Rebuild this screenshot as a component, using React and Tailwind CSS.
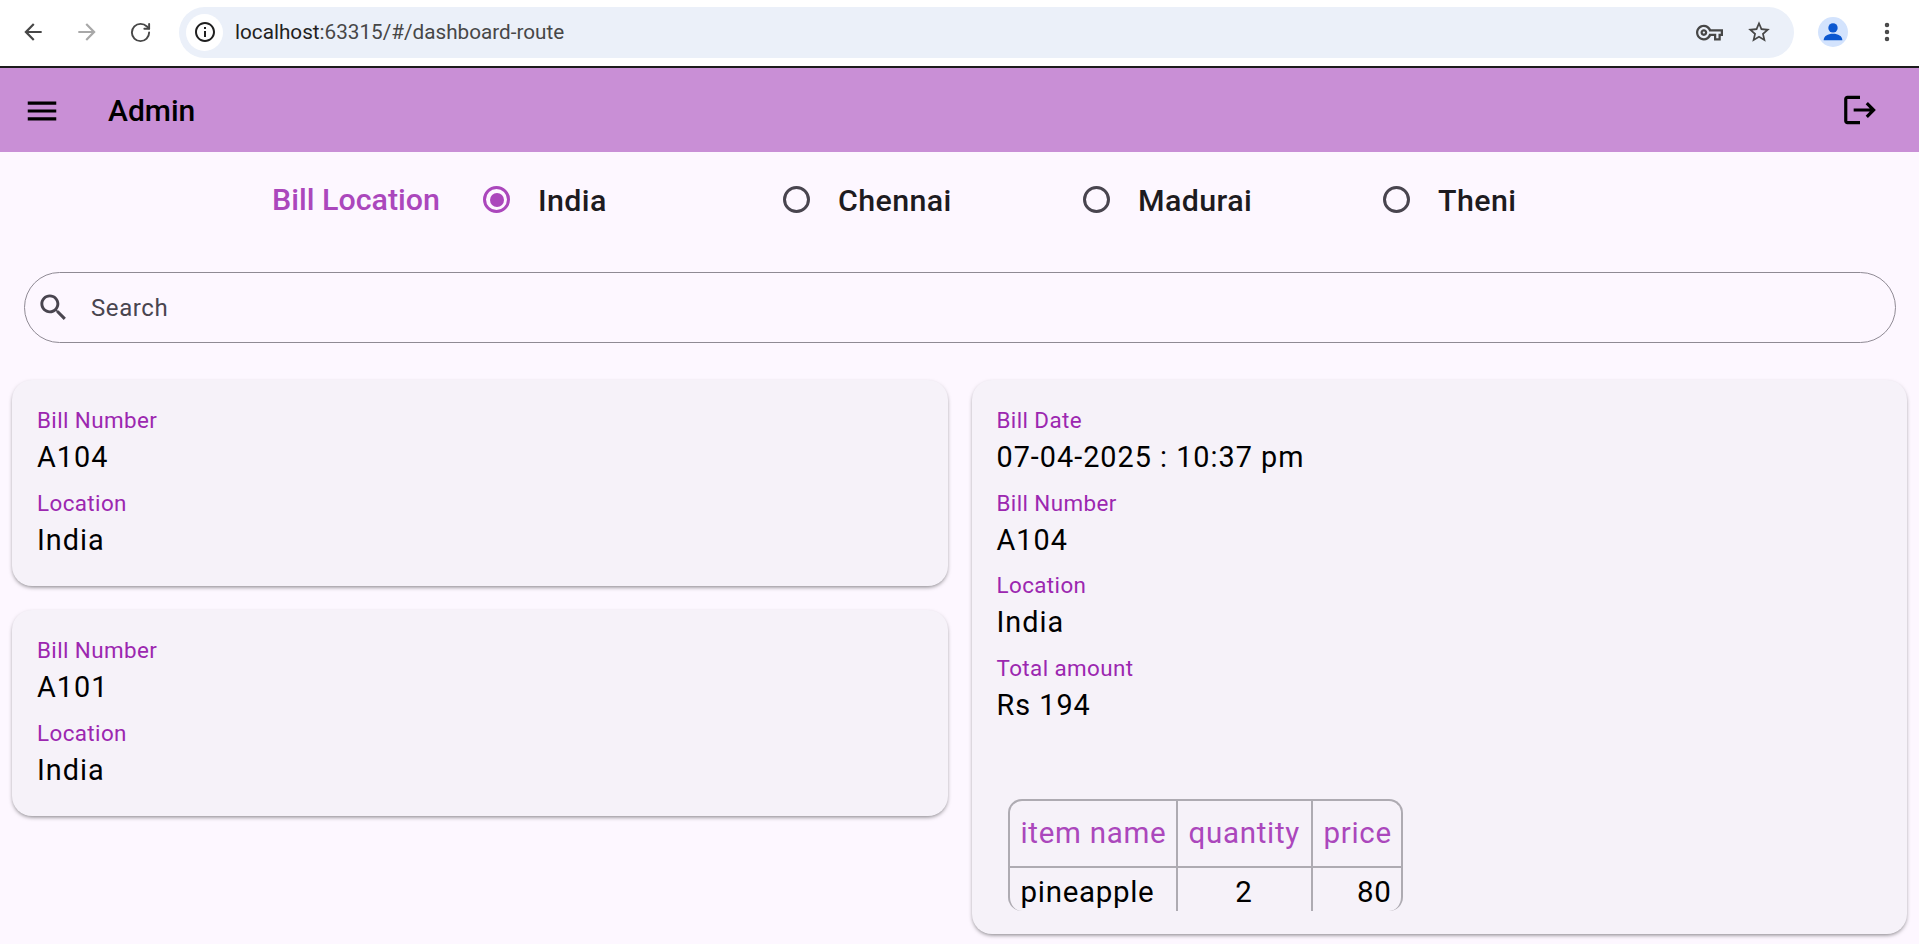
import React from 'react';
import { RotateCw, EllipsisVertical } from 'lucide-react';

function Field({ label, value }) {
  return (
    <div className="mb-[8.6px]">
      <div className="text-[22.4px] leading-[30px] tracking-[0.4px] text-[#9c27b0]">{label}</div>
      <div className="text-[28.8px] leading-[44px] tracking-[1px] text-black">{value}</div>
    </div>
  );
}

function Radio({ label, checked }) {
  return (
    <div className="flex w-[300px] items-center">
      <div className={`flex h-[27px] w-[27px] items-center justify-center rounded-full border-[3px] ${checked ? 'border-[#ab47bc]' : 'border-[#49454f]'}`}>
        {checked && <div className="h-[14px] w-[14px] rounded-full bg-[#ab47bc]" />}
      </div>
      <span className="ml-[28px] pt-[1px] text-[30.4px] font-medium tracking-[0.4px] text-[#1d1b20]">{label}</span>
    </div>
  );
}

function Icon({ d, size, className }) {
  return (
    <svg viewBox="0 0 24 24" width={size} height={size} className={`shrink-0 fill-current ${className}`}>
      <path d={d} />
    </svg>
  );
}

const ICONS = {
  back: 'M20 11H7.83l5.59-5.59L12 4l-8 8 8 8 1.41-1.41L7.83 13H20v-2z',
  forward: 'M4 11h12.17l-5.59-5.59L12 4l8 8-8 8-1.41-1.41L16.17 13H4v-2z',
  key: 'M22 19h-6v-4h-2.68c-1.14 2.42-3.6 4-6.32 4-3.86 0-7-3.14-7-7s3.14-7 7-7c2.72 0 5.17 1.58 6.32 4H24v6h-2v4zm-4-2h2v-4h2v-2H11.66l-.23-.67C10.73 8.34 8.84 7 7 7c-2.76 0-5 2.24-5 5s2.24 5 5 5c1.84 0 3.73-1.34 4.43-3.33l.23-.67H18v4zM7 15c-1.65 0-3-1.35-3-3s1.35-3 3-3 3 1.35 3 3-1.35 3-3 3zm0-4c-.55 0-1 .45-1 1s.45 1 1 1 1-.45 1-1-.45-1-1-1z',
  star: 'M22 9.24l-7.19-.62L12 2 9.19 8.63 2 9.24l5.46 4.73L5.82 21 12 17.27 18.18 21l-1.63-7.03L22 9.24zM12 15.4l-3.76 2.27 1-4.28-3.32-2.88 4.38-.38L12 6.1l1.71 4.04 4.38.38-3.32 2.88 1 4.28L12 15.4z',
  info: 'M11 7h2v2h-2zm0 4h2v6h-2zm1-9C6.48 2 2 6.48 2 12s4.48 10 10 10 10-4.48 10-10S17.52 2 12 2zm0 18c-4.41 0-8-3.59-8-8s3.59-8 8-8 8 3.59 8 8-3.59 8-8 8z',
  menu: 'M3 18h18v-2H3v2zm0-5h18v-2H3v2zm0-7v2h18V6H3z',
  logout: 'M17 7l-1.41 1.41L18.17 11H8v2h10.17l-2.58 2.58L17 17l5-5zM4 5h8V3H4c-1.1 0-2 .9-2 2v14c0 1.1.9 2 2 2h8v-2H4V5z',
  search: 'M15.5 14h-.79l-.28-.27C15.41 12.59 16 11.11 16 9.5 16 5.91 13.09 3 9.5 3S3 5.91 3 9.5 5.91 16 9.5 16c1.61 0 3.09-.59 4.23-1.57l.27.28v.79l5 4.99L20.49 19l-4.99-5zm-6 0C7.01 14 5 11.99 5 9.5S7.01 5 9.5 5 14 7.01 14 9.5 11.99 14 9.5 14z',
};

function BillCard({ number }) {
  return (
    <div className="h-[206px] rounded-[20px] bg-[#f6f2f9] px-[25px] pt-[25px] shadow-[0_2px_4px_-1px_rgba(0,0,0,0.5)]">
      <Field label="Bill Number" value={number} />
      <Field label="Location" value="India" />
    </div>
  );
}

function BrowserBar() {
  return (
    <div className="flex h-[68px] items-center border-b-2 border-[#1c1c1c] bg-white pb-[2px] pl-[20px] pr-[20px]">
      <Icon d={ICONS.back} size={26} className="text-[#474747]" />
      <Icon d={ICONS.forward} size={26} className="ml-[28px] text-[#a8a8a8]" />
      <RotateCw size={23} strokeWidth={2} className="ml-[29px] text-[#474747]" />
      <div className="ml-[27px] flex h-[51px] flex-1 items-center rounded-full bg-[#ebf0f9] pl-[7px] pr-[22px]">
        <div className="flex h-[37px] w-[37px] items-center justify-center rounded-full bg-white">
          <Icon d={ICONS.info} size={24} className="text-[#1f1f1f]" />
        </div>
        <span className="ml-[12px] pt-[1px] text-[20.7px] text-[#1f1f1f]">
          localhost<span className="text-[#474747]">:63315/#/dashboard-route</span>
        </span>
        <div className="flex-1" />
        <Icon d={ICONS.key} size={27} className="text-[#474747]" />
        <Icon d={ICONS.star} size={26} className="ml-[23px] text-[#474747]" />
      </div>
      <div className="ml-[24px] flex h-[30px] w-[30px] items-center justify-center rounded-full bg-[#d3e3fd]">
        <svg viewBox="0 0 24 24" className="h-[28px] w-[28px] fill-[#0b57d0]">
          <circle cx="12" cy="8.5" r="4" />
          <path d="M4 19c0-3.500 3.600-5.500 8-5.500s8 2 8 5.500z" />
        </svg>
      </div>
      <EllipsisVertical size={24} strokeWidth={2.5} className="ml-[27px] text-[#474747]" />
    </div>
  );
}

export default function App() {
  return (
    <div className="flex h-[944px] flex-col overflow-hidden bg-[#fdf7ff]" style={{ fontFamily: 'Roboto, sans-serif' }}>
      <BrowserBar />

      {/* app bar */}
      <div className="flex h-[84px] items-center bg-[#c98fd6] pl-[23px] pr-[40px]">
        <Icon d={ICONS.menu} size={38} className="mt-[2px] text-black" />
        <span className="ml-[47px] text-[30px] font-medium text-black">Admin</span>
        <div className="flex-1" />
        <Icon d={ICONS.logout} size={38} className="text-black" />
      </div>

      {/* location radios */}
      <div className="flex h-[96px] items-center pl-[272px]">
        <span className="w-[211px] text-[30.4px] font-medium text-[#ab47bc]">Bill Location</span>
        <Radio label="India" checked />
        <Radio label="Chennai" />
        <Radio label="Madurai" />
        <Radio label="Theni" />
      </div>

      <div className="pl-[24px] pr-[23px] pt-[24px]">
        <div className="flex h-[71px] items-center rounded-full border border-[#8f8a94] pl-[11px]">
          <Icon d={ICONS.search} size={35} className="text-[#49454f]" />
          <span className="ml-[20px] text-[24px] tracking-[0.6px] text-[#49454f]">Search</span>
        </div>
      </div>

      <div className="grid grid-cols-2 gap-[24px] px-[12px] pt-[37px]">
        <div className="flex flex-col gap-[24px]">
          <BillCard number="A104" />
          <BillCard number="A101" />
        </div>

        <div className="h-[554px] rounded-[20px] bg-[#f6f2f9] px-[25px] pt-[25px] shadow-[0_2px_4px_-1px_rgba(0,0,0,0.5)]">
          <Field label="Bill Date" value="07-04-2025 : 10:37 pm" />
          <Field label="Bill Number" value="A104" />
          <Field label="Location" value="India" />
          <Field label="Total amount" value="Rs 194" />

          <div className="ml-[11px] mt-[72px] h-[112px] w-[395px] overflow-hidden rounded-[14px] border-2 border-b-0 border-[#aeabb2]">
            <table className="w-full table-fixed border-collapse text-[29.5px] tracking-[0.7px]">
              <colgroup>
                <col className="w-[167px]" />
                <col className="w-[135px]" />
                <col />
              </colgroup>
              <thead>
                <tr className="h-[66px] text-[#ab47bc]">
                  <th className="border-b-2 border-r-2 border-[#aeabb2] pl-[11px] text-left font-normal">item name</th>
                  <th className="border-b-2 border-r-2 border-[#aeabb2] pl-[11px] text-left font-normal">quantity</th>
                  <th className="border-b-2 border-[#aeabb2] pl-[11px] text-left font-normal">price</th>
                </tr>
              </thead>
              <tbody>
                <tr className="h-[50px] text-black">
                  <td className="border-r-2 border-[#aeabb2] pl-[11px]">pineapple</td>
                  <td className="border-r-2 border-[#aeabb2] text-center">2</td>
                  <td className="pr-[9px] text-right">80</td>
                </tr>
              </tbody>
            </table>
          </div>
        </div>
      </div>
    </div>
  );
}
